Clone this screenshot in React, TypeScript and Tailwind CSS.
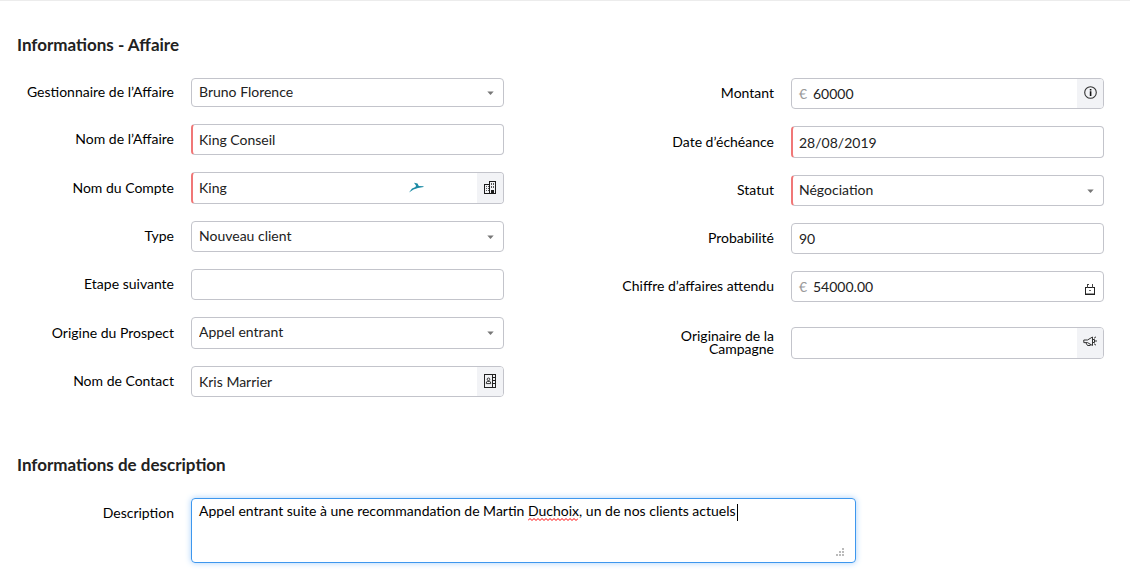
import type { ReactNode } from "react";
import clsx from "clsx";

type FieldProps = {
  id: string;
  label: string;
  children: ReactNode;
  className?: string;
};

const box = "w-full rounded-[4px] border border-[#c3c4cb] bg-white px-[7px] text-sm text-[#222]";
const required = "border-l-2 border-l-[#f07777] pl-[6px]";

function Field({ id, label, children, className }: FieldProps) {
  return (
    <div className={clsx("flex items-center gap-[17px]", className)}>
      <label htmlFor={id} className="w-[157px] shrink-0 pb-[2px] text-right text-sm leading-[13px] text-black">
        {label}
      </label>
      <div className="relative min-w-0 flex-1">{children}</div>
    </div>
  );
}

type SelectFieldProps = {
  id: string;
  label: string;
  value: string;
  isRequired?: boolean;
  height?: string;
};

function SelectField({ id, label, value, isRequired, height = "h-[31px]" }: SelectFieldProps) {
  return (
    <Field id={id} label={label}>
      <select id={id} defaultValue={value} className={clsx(box, "block appearance-none pb-[2px]", height, isRequired && required)}>
        <option>{value}</option>
      </select>
      <svg className="pointer-events-none absolute right-[10px] top-1/2 -mt-[2px]" width="7" height="4" viewBox="0 0 7 4" aria-hidden="true">
        <path d="M0.3 0.5h6.400L3.500 3.900z" fill="#777" />
      </svg>
    </Field>
  );
}

function InputField({ id, label, value, isRequired, tall }: { id: string; label: string; value?: string; isRequired?: boolean; tall?: boolean }) {
  return (
    <Field id={id} label={label}>
      <input id={id} type="text" defaultValue={value} className={clsx(box, "block", tall ? "h-8" : "h-[31px]", isRequired && required)} />
    </Field>
  );
}

function Addon({ label, children }: { label: string; children: ReactNode }) {
  return (
    <button type="button" aria-label={label} className="flex w-[26px] shrink-0 items-center justify-center rounded-r-[3px] bg-[#f2f3f6] pb-[2px]">
      {children}
    </button>
  );
}

function BuildingIcon() {
  return (
    <svg width="12" height="13" viewBox="0 0 12 13" fill="none" shapeRendering="crispEdges" aria-hidden="true">
      <path d="M5.500 12.500v-12h6v12z M5.500 3.500h-5v9h5" stroke="#1c1c1c" />
      <path d="M7 2h1v2H7zM9 2h1v2H9zM7 5h1v2H7zM9 5h1v2H9zM2 5h1v1H2zM4 5h1v1H4zM2 7h1v1H2zM4 7h1v1H4zM2 9h1v1H2zM4 9h1v1H4z" fill="#555" />
      <path d="M7 9h3v4H7z" fill="#1c1c1c" />
    </svg>
  );
}

function InfoIcon() {
  return (
    <svg width="13" height="13" viewBox="0 0 13 13" fill="none" aria-hidden="true">
      <circle cx="6.5" cy="6.5" r="5.8" stroke="#333" strokeWidth="1.1" />
      <path d="M5.8 3h1.600v1.400H5.800zM5.800 5.200h1.600V10H5.800z" fill="#111" />
    </svg>
  );
}

function ContactIcon() {
  return (
    <svg width="12" height="14" viewBox="0 0 12 14" fill="none" aria-hidden="true">
      <path d="M0.500 0.500h11v13H0.500zM8.500 0.500v13M8.500 3.500h3M8.500 6.500h3M8.500 9.500h3" stroke="#222" shapeRendering="crispEdges" />
      <circle cx="4.5" cy="5.3" r="1.3" stroke="#333" />
      <path d="M2.300 9.600V9q0-1.600 1.400-1.600h1.600Q6.700 7.400 6.700 9v0.600z" stroke="#333" />
    </svg>
  );
}

function MegaphoneIcon() {
  return (
    <svg width="14" height="12" viewBox="0 0 14 12" fill="none" stroke="#333" aria-hidden="true">
      <path d="M9.500 1 4.500 4H0.800v2.600h3.700l5 2.900z" />
      <path d="M3 7l1.500 2.500h2.800V8.300M10 3.500h1.500v3H10M11 2.300l2-1.500M11.500 5H14M11 7.700l2 1.500" />
    </svg>
  );
}

function LockIcon() {
  return (
    <svg width="10" height="11" viewBox="0 0 10 11" fill="none" aria-hidden="true">
      <path d="M0.500 3.500h9v7h-9z" stroke="#222" shapeRendering="crispEdges" />
      <path d="M2.500 3.500v-3h1M7.500 3.500v-3h-1" stroke="#444" shapeRendering="crispEdges" />
      <path d="M4 6h2v1H4z" fill="#666" />
      <path d="M1 9h8v1H1z" fill="#999" />
    </svg>
  );
}

function BirdIcon() {
  return (
    <svg width="15" height="11" viewBox="0 0 15 11" aria-hidden="true">
      <path d="M0 10.500 3 6.500 6.500 5 7 3.500 5 0.800 8.500 1.500 9.800 4 14.500 4.200V5L9 6 4.500 7.500z" fill="#1c8ba5" />
    </svg>
  );
}

export default function App() {
  return (
    <main className="border-t border-[#ececec] bg-white pl-[17px] pr-[26px] pt-[34px] pb-5 font-['Lato',sans-serif]">
      <section>
        <h2 className="text-[17px] leading-5 font-bold text-[#222]">Informations - Affaire</h2>
        <div className="mt-[23px] grid grid-cols-2 items-start gap-x-[113px]">
          <div className="flex flex-col gap-[17px]">
            <SelectField id="gestionnaire" label="Gestionnaire de l’Affaire" value="Bruno Florence" height="h-[29px]" />
            <InputField id="affaire" label="Nom de l’Affaire" value="King Conseil" isRequired />
            <Field id="compte" label="Nom du Compte">
              <div className="flex h-8 rounded-[4px] border border-l-2 border-[#c3c4cb] border-l-[#f07777]">
                <input id="compte" type="text" defaultValue="King" className="min-w-0 flex-1 rounded-l-[3px] px-[6px] text-sm text-[#222]" />
                <span className="flex w-[68px] items-center pb-[2px]">
                  <BirdIcon />
                </span>
                <Addon label="Choisir un compte">
                  <BuildingIcon />
                </Addon>
              </div>
            </Field>
            <SelectField id="type" label="Type" value="Nouveau client" />
            <InputField id="etape" label="Etape suivante" />
            <SelectField id="origine" label="Origine du Prospect" value="Appel entrant" height="h-8" />
            <Field id="contact" label="Nom de Contact">
              <div className="flex h-[31px] rounded-[4px] border border-[#c3c4cb]">
                <input id="contact" type="text" defaultValue="Kris Marrier" className="min-w-0 flex-1 rounded-l-[3px] px-[7px] text-sm text-[#222]" />
                <Addon label="Choisir un contact">
                  <ContactIcon />
                </Addon>
              </div>
            </Field>
          </div>

          <div className="flex flex-col gap-[17px]">
            <Field id="montant" label="Montant">
              <div className="flex h-[31px] rounded-[4px] border border-[#c3c4cb] pl-[7px]">
                <span className="w-[14px] self-center text-sm text-[#999]">€</span>
                <input id="montant" type="text" defaultValue="60000" className="min-w-0 flex-1 text-sm text-[#222]" />
                <Addon label="Informations sur le montant">
                  <InfoIcon />
                </Addon>
              </div>
            </Field>
            <InputField id="echeance" label="Date d’échéance" value="28/08/2019" isRequired tall />
            <SelectField id="statut" label="Statut" value="Négociation" isRequired />
            <InputField id="probabilite" label="Probabilité" value="90" />
            <Field id="chiffre" label="Chiffre d’affaires attendu">
              <div className="flex h-[31px] items-center rounded-[4px] border border-[#c3c4cb] pl-[7px] pr-2">
                <span className="w-[14px] text-sm text-[#999]">€</span>
                <input id="chiffre" type="text" readOnly defaultValue="54000.00" className="min-w-0 flex-1 text-sm text-[#222]" />
                <span className="pt-[5px]">
                  <LockIcon />
                </span>
              </div>
            </Field>
            <Field id="campagne" label="Originaire de la Campagne" className="pt-2">
              <div className="flex h-8 rounded-[4px] border border-[#c3c4cb]">
                <input id="campagne" type="text" className="min-w-0 flex-1 rounded-l-[3px] px-[7px] text-sm text-[#222]" />
                <Addon label="Choisir une campagne">
                  <MegaphoneIcon />
                </Addon>
              </div>
            </Field>
          </div>
        </div>
      </section>

      <section className="mt-[58px]">
        <h2 className="text-[17px] leading-5 font-bold text-[#222]">Informations de description</h2>
        <div className="mt-[23px] flex gap-[17px]">
          <label htmlFor="description" className="w-[157px] shrink-0 pt-[5px] text-right text-sm text-black">
            Description
          </label>
          <div className="relative max-w-[665px] flex-1">
            <textarea
              id="description"
              spellCheck={false}
              defaultValue="Appel entrant suite à une recommandation de Martin Duchoix, un de nos clients actuels"
              className="block h-[65px] w-full resize-none rounded-[4px] border border-[#3d97ee] px-[7px] py-[2px] text-sm text-black shadow-[0_0_6px_#a9d1fa] outline-none"
            />
            <svg className="pointer-events-none absolute left-[337px] top-[20px]" width="50" height="3" viewBox="0 0 50 3" aria-hidden="true">
              <path
                d="M0 2.500 2 0.500 4 2.500 6 0.500 8 2.500 10 0.500 12 2.500 14 0.500 16 2.500 18 0.500 20 2.500 22 0.500 24 2.500 26 0.500 28 2.500 30 0.500 32 2.500 34 0.500 36 2.500 38 0.500 40 2.500 42 0.500 44 2.500 46 0.500 48 2.500 50 0.500"
                fill="none"
                stroke="#f00"
              />
            </svg>
            <span className="pointer-events-none absolute left-[546px] top-[6px] h-[17px] w-px bg-black" />
            <svg className="pointer-events-none absolute right-3 bottom-[7px]" width="8" height="8" viewBox="0 0 8 8" fill="#bbb" shapeRendering="crispEdges" aria-hidden="true">
              <path d="M6 0h2v2H6zM3 3h2v2H3zM6 3h2v2H6zM0 6h2v2H0zM3 6h2v2H3zM6 6h2v2H6z" />
            </svg>
          </div>
        </div>
      </section>
    </main>
  );
}
